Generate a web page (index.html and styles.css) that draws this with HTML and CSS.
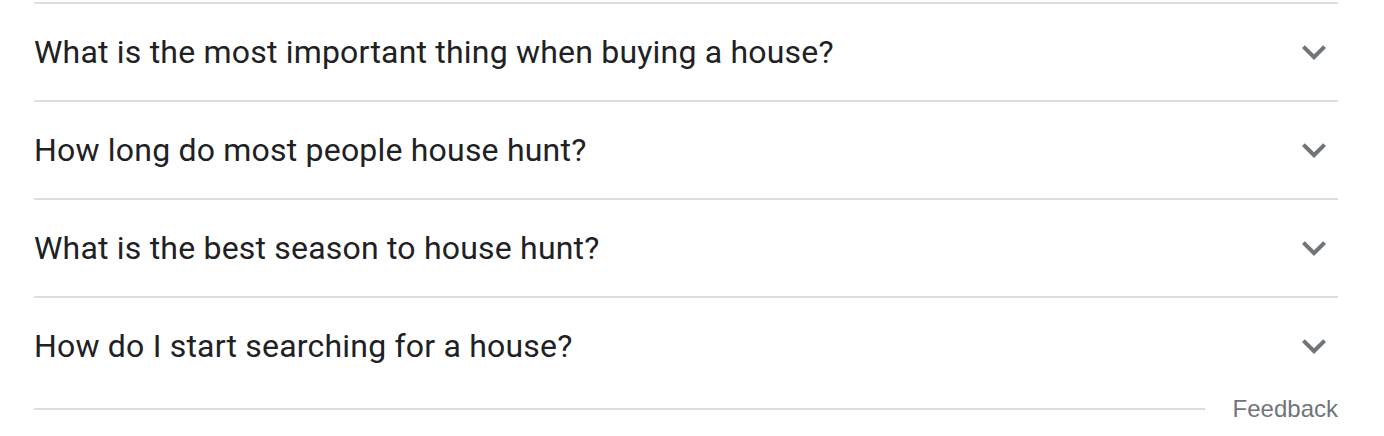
FILE: index.html
```html
<!DOCTYPE html>
<html>
<head>
<title>People also ask</title>
<link rel="stylesheet" href="styles.css">
</head>
<body>
  <div class="faq">
    <div class="question">
      <span class="question-text">What is the most important thing when buying a house?</span>
      <svg class="chevron" viewBox="0 0 24 24"><path d="M16.59 8.59L12 13.17 7.41 8.59 6 10l6 6 6-6z"/></svg>
    </div>
    <div class="question">
      <span class="question-text">How long do most people house hunt?</span>
      <svg class="chevron" viewBox="0 0 24 24"><path d="M16.59 8.59L12 13.17 7.41 8.59 6 10l6 6 6-6z"/></svg>
    </div>
    <div class="question">
      <span class="question-text">What is the best season to house hunt?</span>
      <svg class="chevron" viewBox="0 0 24 24"><path d="M16.59 8.59L12 13.17 7.41 8.59 6 10l6 6 6-6z"/></svg>
    </div>
    <div class="question">
      <span class="question-text">How do I start searching for a house?</span>
      <svg class="chevron" viewBox="0 0 24 24"><path d="M16.59 8.59L12 13.17 7.41 8.59 6 10l6 6 6-6z"/></svg>
    </div>

    <div class="faq-footer">
      <div class="footer-line"></div>
      <a class="feedback" href="#">Feedback</a>
    </div>
  </div>
</body>
</html>
```

FILE: styles.css
```css
body {
  margin: 0;
  background-color: #fff;
  font-family: Roboto, "Liberation Sans", sans-serif;
}

.faq {
  padding: 2px 46px 0 34px;
}

.question {
  display: flex;
  align-items: center;
  justify-content: space-between;
  height: 96px;
  border-top: 2px solid #dadce0;
}

.question-text {
  font-size: 32px;
  letter-spacing: 0.2px;
  color: #202124;
}

.chevron {
  width: 48px;
  height: 48px;
  fill: #70757a;
}

/* Bottom rule with feedback link */
.faq-footer {
  display: flex;
  align-items: center;
  height: 30px;
}

.footer-line {
  flex: 1;
  height: 2px;
  background-color: #dadce0;
}

.feedback {
  margin-left: 28px;
  font-family: "Liberation Sans", Arial, sans-serif;
  font-size: 24px;
  line-height: 30px;
  color: #70757a;
  text-decoration: none;
}
```
